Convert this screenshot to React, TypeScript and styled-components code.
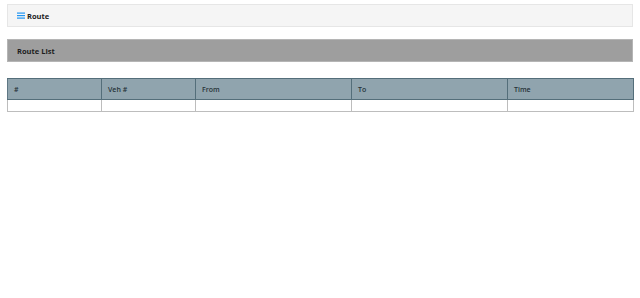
import React from 'react';
import styled, { createGlobalStyle } from 'styled-components';

const GlobalStyle = createGlobalStyle`
  body {
    margin: 0;
    background: #ffffff;
    font-family: 'Open Sans', 'Noto Sans', sans-serif;
    color: #222;
  }
`;

const Page = styled.div`
  display: flex;
  flex-direction: column;
  padding: 4px 7px 0 7px;
`;

const TopBar = styled.div`
  display: flex;
  align-items: center;
  height: 21px;
  padding-left: 9px;
  background-color: #f5f5f5;
  border: 1px solid #e6e6e6;
  font-size: 7.5px;
  font-weight: 700;
`;

const MenuIcon = styled.svg`
  width: 8px;
  height: 7px;
  margin-right: 2px;
`;

const SectionBar = styled.div`
  display: flex;
  align-items: center;
  height: 21px;
  margin-top: 12px;
  padding-left: 9px;
  background-color: #9e9e9e;
  border: 1px solid #b5b5b5;
  font-size: 7.5px;
  font-weight: 700;
  color: #1e1e1e;
`;

const Table = styled.table`
  margin-top: 16px;
  width: 626px;
  border-collapse: collapse;
  table-layout: fixed;
`;

const Col = styled.col<{ $w: number }>`
  width: ${(p) => p.$w}px;
`;

const HeadCell = styled.th`
  height: 20px;
  padding: 0 0 0 6px;
  text-align: left;
  background-color: #90a4ae;
  border: 1px solid #546e7a;
  border-left-color: #5f7784;
  font-size: 7px;
  font-weight: 600;
  color: #263238;
`;

const BodyCell = styled.td`
  height: 11px;
  padding: 0;
  border: 1px solid #bdbdbd;
`;

const columns = [
  { label: '#', w: 94 },
  { label: 'Veh #', w: 94 },
  { label: 'From', w: 156 },
  { label: 'To', w: 156 },
  { label: 'Time', w: 126 },
];

const App: React.FC = () => {
  return (
    <Page>
      <GlobalStyle />
      <TopBar>
        <MenuIcon viewBox="0 0 8 7">
          <rect x="0" y="0.5" width="8" height="1.2" fill="#2196f3" />
          <rect x="0" y="3" width="8" height="1.2" fill="#2196f3" />
          <rect x="0" y="5.5" width="8" height="1.2" fill="#2196f3" />
        </MenuIcon>
        Route
      </TopBar>
      <SectionBar>Route List</SectionBar>
      <Table>
        <colgroup>
          {columns.map((c) => (
            <Col key={c.label} $w={c.w} />
          ))}
        </colgroup>
        <thead>
          <tr>
            {columns.map((c) => (
              <HeadCell key={c.label}>{c.label}</HeadCell>
            ))}
          </tr>
        </thead>
        <tbody>
          <tr>
            {columns.map((c) => (
              <BodyCell key={c.label} />
            ))}
          </tr>
        </tbody>
      </Table>
    </Page>
  );
};

export default App;
